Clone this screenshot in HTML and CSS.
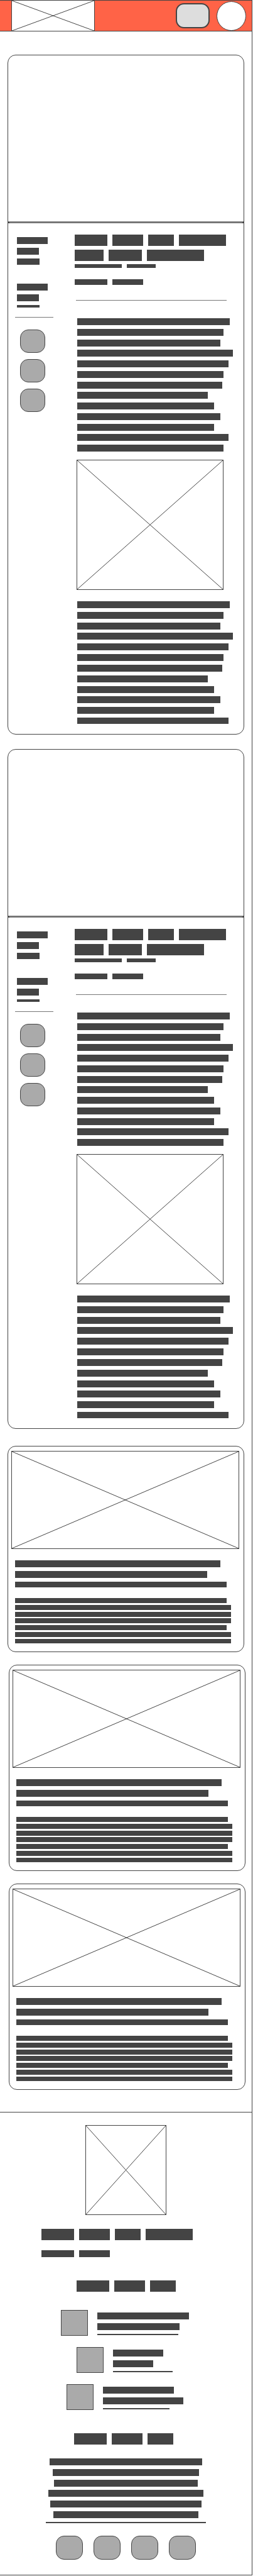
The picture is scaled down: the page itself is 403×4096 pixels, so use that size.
FILE: index.html
```html
<!DOCTYPE html>
<html lang="en">
<head>
<meta charset="utf-8">
<meta name="viewport" content="width=device-width, initial-scale=1">
<title>Blog wireframe</title>
<link rel="stylesheet" href="styles.css">
</head>
<body>
<div class="frame">
  <header class="topbar">
    <a class="photo logo" href="#" aria-label="Home"><svg class="cross" viewBox="0 0 100 100" preserveAspectRatio="none" aria-hidden="true"><path d="M0 0L100 100M100 0L0 100"/></svg></a>
    <button class="menu" type="button" aria-label="Menu"></button>
    <button class="avatar" type="button" aria-label="Account"></button>
  </header>

  <main class="feed">
    <article class="card post">
      <div class="hero"></div>
      <hr class="divider">
      <div class="post-body">
        <aside class="meta">
          <div class="stack"><i class="bar w-date"></i><i class="bar w-tag"></i><i class="bar w-type"></i></div>
          <div class="stack stack-cut"><i class="bar w-date"></i><i class="bar w-tag"></i><i class="bar w-type"></i></div>
          <hr class="rule">
          <nav class="share" aria-label="Share">
            <a class="chip" href="#" aria-label="Share one"></a>
            <a class="chip" href="#" aria-label="Share two"></a>
            <a class="chip" href="#" aria-label="Share three"></a>
          </nav>
        </aside>
        <section class="content">
          <div class="title">
            <div class="words"><i class="w-a"></i><i class="w-b"></i><i class="w-c"></i><i class="w-d"></i></div>
            <div class="words"><i class="w-e"></i><i class="w-f"></i><i class="w-g"></i></div>
          </div>
          <div class="words words-thin"><i class="w-d"></i><i class="w-e"></i></div>
          <div class="words words-byline"><i class="w-a"></i><i class="w-b"></i></div>
          <hr class="rule rule-title">
          <div class="lines lines-intro"><i></i><i></i><i></i><i></i><i></i><i></i><i></i><i></i><i></i><i></i><i></i><i></i><i></i></div>
          <div class="photo figure"><svg class="cross" viewBox="0 0 100 100" preserveAspectRatio="none" aria-hidden="true"><path d="M0 0L100 100M100 0L0 100"/></svg></div>
          <div class="lines lines-rest"><i></i><i></i><i></i><i></i><i></i><i></i><i></i><i></i><i></i><i></i><i></i><i></i></div>
        </section>
      </div>
    </article>

    <article class="card post">
      <div class="hero"></div>
      <hr class="divider">
      <div class="post-body">
        <aside class="meta">
          <div class="stack"><i class="bar w-date"></i><i class="bar w-tag"></i><i class="bar w-type"></i></div>
          <div class="stack stack-cut"><i class="bar w-date"></i><i class="bar w-tag"></i><i class="bar w-type"></i></div>
          <hr class="rule">
          <nav class="share" aria-label="Share">
            <a class="chip" href="#" aria-label="Share one"></a>
            <a class="chip" href="#" aria-label="Share two"></a>
            <a class="chip" href="#" aria-label="Share three"></a>
          </nav>
        </aside>
        <section class="content">
          <div class="title">
            <div class="words"><i class="w-a"></i><i class="w-b"></i><i class="w-c"></i><i class="w-d"></i></div>
            <div class="words"><i class="w-e"></i><i class="w-f"></i><i class="w-g"></i></div>
          </div>
          <div class="words words-thin"><i class="w-d"></i><i class="w-e"></i></div>
          <div class="words words-byline"><i class="w-a"></i><i class="w-b"></i></div>
          <hr class="rule rule-title">
          <div class="lines lines-intro"><i></i><i></i><i></i><i></i><i></i><i></i><i></i><i></i><i></i><i></i><i></i><i></i><i></i></div>
          <div class="photo figure"><svg class="cross" viewBox="0 0 100 100" preserveAspectRatio="none" aria-hidden="true"><path d="M0 0L100 100M100 0L0 100"/></svg></div>
          <div class="lines lines-rest"><i></i><i></i><i></i><i></i><i></i><i></i><i></i><i></i><i></i><i></i><i></i><i></i></div>
        </section>
      </div>
    </article>

    <section class="teasers">
      <article class="card teaser">
        <div class="photo cover"><svg class="cross" viewBox="0 0 100 100" preserveAspectRatio="none" aria-hidden="true"><path d="M0 0L100 100M100 0L0 100"/></svg></div>
        <div class="headline"><i></i><i></i><i></i></div>
        <div class="summary"><i></i><i></i><i></i><i></i><i></i><i></i><i></i></div>
      </article>
      <article class="card teaser teaser-inset">
        <div class="photo cover"><svg class="cross" viewBox="0 0 100 100" preserveAspectRatio="none" aria-hidden="true"><path d="M0 0L100 100M100 0L0 100"/></svg></div>
        <div class="headline"><i></i><i></i><i></i></div>
        <div class="summary"><i></i><i></i><i></i><i></i><i></i><i></i><i></i></div>
      </article>
      <article class="card teaser teaser-inset">
        <div class="photo cover"><svg class="cross" viewBox="0 0 100 100" preserveAspectRatio="none" aria-hidden="true"><path d="M0 0L100 100M100 0L0 100"/></svg></div>
        <div class="headline"><i></i><i></i><i></i></div>
        <div class="summary"><i></i><i></i><i></i><i></i><i></i><i></i><i></i></div>
      </article>
    </section>
  </main>

  <footer class="footer">
    <div class="photo brand"><svg class="cross" viewBox="0 0 100 100" preserveAspectRatio="none" aria-hidden="true"><path d="M0 0L100 100M100 0L0 100"/></svg></div>
    <div class="about">
      <div class="words"><i class="w-a"></i><i class="w-b"></i><i class="w-c"></i><i class="w-d"></i></div>
      <div class="words words-sub"><i class="w-a"></i><i class="w-b"></i></div>
    </div>
    <div class="words"><i class="w-a"></i><i class="w-b"></i><i class="w-c"></i></div>
    <ul class="recent">
      <li class="recent-item"><div class="thumb"></div><div class="recent-text recent-one"><i></i><i></i><i></i></div></li>
      <li class="recent-item"><div class="thumb"></div><div class="recent-text recent-two"><i></i><i></i><i></i></div></li>
      <li class="recent-item"><div class="thumb"></div><div class="recent-text recent-three"><i></i><i></i><i></i></div></li>
    </ul>
    <div class="words words-contact"><i class="w-a"></i><i class="w-b"></i><i class="w-c"></i></div>
    <div class="closing"><i></i><i></i><i></i><i></i><i></i><i></i><i></i></div>
    <nav class="social" aria-label="Social">
      <a class="chip chip-wide" href="#" aria-label="Social one"></a>
      <a class="chip chip-wide" href="#" aria-label="Social two"></a>
      <a class="chip chip-wide" href="#" aria-label="Social three"></a>
      <a class="chip chip-wide" href="#" aria-label="Social four"></a>
    </nav>
  </footer>
</div>
</body>
</html>
```

FILE: styles.css
```css
:root {
  --ink: #444;
  --grey: #aaa;
  --line: #777;
}

* {
  box-sizing: border-box;
}

body {
  margin: 0 1px 0 0;
  background: #fff;
  font-family: "Liberation Sans", Arial, sans-serif;
}

hr {
  margin: 0;
}

i {
  display: block;
  flex: none;
  background: var(--ink);
}

.frame {
  border: solid var(--ink);
  border-width: 0 1px 1px 0;
}

/* Crossed picture box */
.photo {
  display: flex;
  border: 1px solid var(--ink);
  background: #fff;
}

.cross {
  width: 100%;
  height: 100%;
}

.cross path {
  fill: none;
  stroke: var(--ink);
  stroke-width: 1px;
  vector-effect: non-scaling-stroke;
}

/* Top bar */
.topbar {
  display: flex;
  align-items: center;
  height: 50px;
  padding: 0 9px 0 18px;
  border: solid var(--ink);
  border-width: 1px 0;
  background: #ff6347;
}

.logo {
  width: 133px;
  height: 48px;
  margin-right: auto;
  border-width: 0 1px;
}

.menu {
  width: 54px;
  height: 40px;
  margin-right: 11px;
  padding: 0;
  border: 2px solid var(--ink);
  border-radius: 13px;
  background: #ddd;
}

.avatar {
  width: 47px;
  height: 47px;
  padding: 0;
  border: 1px solid var(--ink);
  border-radius: 50%;
  background: #fff;
}

/* Feed */
.feed {
  display: flex;
  flex-direction: column;
  gap: 23px;
  padding: 37px 12px 35px;
}

.card {
  border: 1px solid var(--ink);
  border-radius: 13px;
}

.hero {
  height: 264px;
}

.divider {
  border: solid;
  border-width: 3px 3px 0;
  border-color: var(--line) var(--ink);
}

.post-body {
  display: flex;
  gap: 34px;
  padding: 0 17px 16px 11px;
}

.meta {
  flex: none;
  width: 61px;
  padding-top: 22px;
}

.stack {
  display: flex;
  flex-direction: column;
  gap: 6px;
  margin: 0 0 30px 3px;
}

.stack-cut {
  margin-bottom: 15px;
}

.bar {
  height: 11px;
}

.bar:last-child {
  height: 10px;
}

.stack-cut .bar:last-child {
  height: 4px;
}

.w-date { width: 49px; }
.w-tag { width: 35px; }
.w-type { width: 36px; }

.rule {
  height: 1px;
  border: 0;
  background: var(--line);
}

.share {
  display: flex;
  flex-direction: column;
  gap: 10px;
  margin: 19px 0 0 8px;
}

.chip {
  width: 40px;
  height: 37px;
  border: 1px solid var(--ink);
  border-radius: 13px;
  background: var(--grey);
}

.content {
  flex: 1;
  padding-top: 18px;
}

.title {
  display: grid;
  gap: 6px;
}

.words {
  display: flex;
  gap: 8px;
  height: 18px;
}

.words-thin {
  height: 6px;
  margin-top: 5px;
}

.words-byline {
  height: 9px;
  margin-top: 18px;
}

.w-a { width: 52px; }
.w-b { width: 49px; }
.w-c { width: 41px; }
.w-d { width: 75px; }
.w-e { width: 46px; }
.w-f { width: 53px; }
.w-g { width: 91px; }

.rule-title {
  margin: 24px 10px 28px 2px;
}

/* Body copy lines, as a share of the longest one */
.lines {
  display: flex;
  flex-direction: column;
  justify-content: space-between;
  margin-left: 4px;
}

.lines i {
  height: 11px;
}

.lines i:nth-child(1) { width: 98%; }
.lines i:nth-child(2) { width: 94%; }
.lines i:nth-child(3) { width: 92%; }
.lines i:nth-child(4) { width: 100%; }
.lines i:nth-child(5) { width: 97%; }
.lines i:nth-child(6) { width: 94%; }
.lines i:nth-child(7) { width: 93%; }
.lines i:nth-child(8) { width: 84%; }
.lines i:nth-child(9) { width: 88%; }
.lines i:nth-child(10) { width: 92%; }
.lines i:nth-child(11) { width: 88%; }
.lines i:nth-child(12) { width: 97%; }
.lines i:nth-child(13) { width: 94%; }

.lines-intro {
  height: 212px;
}

.lines-rest {
  height: 195px;
}

.lines-rest i:last-child {
  height: 10px;
}

.figure {
  height: 207px;
  margin: 13px 15px 18px 3px;
}

/* Teasers */
.teasers {
  display: flex;
  flex-direction: column;
  gap: 20px;
  padding-top: 4px;
}

.teaser {
  padding: 7px 7px 13px 5px;
}

.teaser-inset {
  margin: 0 -2px 0 2px;
}

.cover {
  height: 156px;
}

.headline,
.summary {
  display: flex;
  flex-direction: column;
  margin: 18px 13px 0 6px;
}

.headline {
  gap: 6px;
}

.headline i {
  height: 11px;
}

.headline i:nth-child(1) { width: 95%; }
.headline i:nth-child(2) { width: 89%; }
.headline i:nth-child(3) { width: 98%; height: 9px; }

.summary {
  justify-content: space-between;
  height: 72px;
  margin-top: 17px;
}

.summary i {
  width: 100%;
  height: 8px;
}

.summary i:nth-child(4n + 1) { width: 98%; }
.summary i:last-child { height: 7px; }

/* Footer */
.footer {
  display: flex;
  flex-direction: column;
  align-items: center;
  padding: 20px 0 24px;
  border-top: 1px solid var(--ink);
}

.brand {
  width: 129px;
  height: 143px;
}

.about {
  margin: 22px 28px 37px 0;
}

.words-sub {
  height: 11px;
  margin-top: 16px;
}

.recent {
  display: flex;
  flex-direction: column;
  align-items: center;
  gap: 18px;
  margin: 29px 0 37px;
  padding: 0 4px 0 0;
  list-style: none;
}

.recent-item {
  display: flex;
  gap: 15px;
}

.thumb {
  width: 43px;
  height: 41px;
  border: 1px solid var(--ink);
  background: var(--grey);
}

.recent-text {
  display: flex;
  flex-direction: column;
  gap: 6px;
  padding-top: 4px;
}

.recent-text i {
  height: 11px;
}

.recent-text i:last-child {
  height: 2px;
}

.recent-one i:nth-child(1) { width: 146px; }
.recent-one i:nth-child(2) { width: 131px; }
.recent-one i:nth-child(3) { width: 129px; }
.recent-two i:nth-child(1) { width: 80px; }
.recent-two i:nth-child(2) { width: 64px; }
.recent-two i:nth-child(3) { width: 95px; }
.recent-three i:nth-child(1) { width: 113px; }
.recent-three i:nth-child(2) { width: 128px; }
.recent-three i:nth-child(3) { width: 106px; }

.words-contact {
  margin-right: 8px;
}

.closing {
  display: flex;
  flex-direction: column;
  align-items: center;
  justify-content: space-between;
  width: 255px;
  height: 103px;
  margin: 22px 0 20px;
}

.closing i {
  height: 11px;
}

.closing i:nth-child(1) { width: 243px; }
.closing i:nth-child(2) { width: 233px; }
.closing i:nth-child(3) { width: 229px; }
.closing i:nth-child(4) { width: 247px; }
.closing i:nth-child(5) { width: 241px; }
.closing i:nth-child(6) { width: 231px; }
.closing i:nth-child(7) { width: 255px; height: 2px; }

.social {
  display: flex;
  gap: 17px;
}

.chip-wide {
  width: 43px;
  height: 38px;
}
```
